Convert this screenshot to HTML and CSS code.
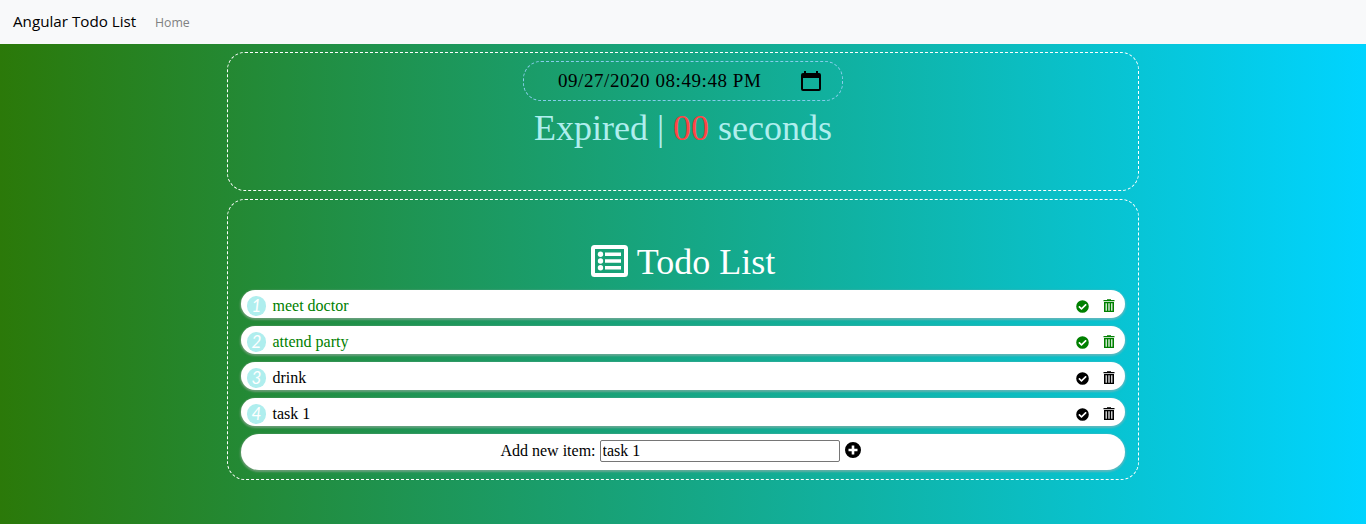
FILE: index.html
```
<!DOCTYPE html>
<html lang="en">
<head>
<meta charset="utf-8">
<title>Angular Todo List</title>
<link rel="stylesheet" href="styles.css">
</head>
<body>
<svg class="defs" width="0" height="0">
  <symbol id="check" viewBox="0 0 512 512"><path d="M504 256A248 248 0 1 1 8 256a248 248 0 0 1 496 0zM227 387 411 203c6-6 6-16 0-22l-22-23c-7-6-17-6-23 0L216 308l-70-70c-6-6-16-6-23 0l-22 23c-6 6-6 16 0 22l104 104c6 6 16 6 22 0z"/></symbol>
  <symbol id="trash" viewBox="0 0 12 13"><path fill-rule="evenodd" d="M.500 1H4V.300h4V1h3.500v1.200H.500zM1 3h10v10H1zM2.600 4.300v7.500h1.200V4.300zM5.400 4.300v7.500h1.200V4.300zM8.200 4.300v7.500h1.200V4.300z"/></symbol>
</svg>
<nav class="navbar">
  <a class="brand">Angular Todo List</a>
  <a class="nav-link">Home</a>
</nav>
<main class="container">
  <section class="panel timer">
    <div class="date-field"><span class="date-text">09/27/2020 08:49:48 PM</span>
      <svg class="calendar" viewBox="0 0 20 21"><path fill-rule="evenodd" d="M3 0h2v2h10V0h2v2h1q2 0 2 2v14q0 2-2 2H2q-2 0-2-2V4q0-2 2-2h1zM2 7v11h16V7z"/></svg>
    </div>
    <div class="countdown">Expired | <span class="count">00</span> seconds</div>
  </section>
  <section class="panel todo">
    <h1 class="title"><svg class="list-icon" viewBox="0 0 37 32"><path fill-rule="evenodd" d="M3.500 0h30Q37 0 37 3.500v25Q37 32 33.500 32h-30Q0 32 0 28.500v-25Q0 0 3.500 0zM4 4v24h29V4z"/><circle cx="9.500" cy="9.300" r="2.700"/><circle cx="9.500" cy="16" r="2.700"/><circle cx="9.500" cy="22.700" r="2.700"/><path d="M14 7.500h16v3.500H14zM14 14.300h16v3.500H14zM14 21h16v3.500H14z"/></svg><span>Todo List</span></h1>
    <ul class="items">
      <li class="item done"><i class="num">1</i><span class="label">meet doctor</span><svg class="check"><use href="#check"/></svg><svg class="trash"><use href="#trash"/></svg></li>
      <li class="item done"><i class="num">2</i><span class="label">attend party</span><svg class="check"><use href="#check"/></svg><svg class="trash"><use href="#trash"/></svg></li>
      <li class="item"><i class="num">3</i><span class="label">drink</span><svg class="check"><use href="#check"/></svg><svg class="trash"><use href="#trash"/></svg></li>
      <li class="item"><i class="num">4</i><span class="label">task 1</span><svg class="check"><use href="#check"/></svg><svg class="trash"><use href="#trash"/></svg></li>
    </ul>
    <form class="add"><label for="new-item">Add new item:</label><input id="new-item" class="new-item" value="task 1"><svg class="plus" viewBox="0 0 16 16"><path fill-rule="evenodd" d="M8 0a8 8 0 1 1 0 16A8 8 0 0 1 8 0zM6.700 3.500v3.200H3.500v2.600h3.200v3.200h2.600V9.300h3.200V6.700H9.300V3.500z"/></svg></form>
  </section>
</main>
</body>
</html>
```

FILE: styles.css
```
* { box-sizing: border-box; }
body {
  margin: 0;
  min-height: 524px;
  font: 16px/24px "Liberation Serif", serif;
  color: #000;
  background: linear-gradient(90deg, rgb(43, 121, 9), rgb(0, 212, 255));
}
svg { fill: currentColor; flex: none; }
.defs { position: absolute; }
.navbar {
  height: 44px;
  padding: 0 13px 2px;
  display: flex;
  align-items: center;
  gap: 19px;
  background: #f8f9fa;
  font-family: "Open Sans", sans-serif;
}
.brand { font-size: 15.200px; width: 123px; white-space: nowrap; }
.nav-link { font-size: 12.300px; color: #808182; padding-top: 3px; }
.container { width: 912px; margin: 8px auto 0; }
.panel { border: 1px dashed #fff; border-radius: 18px; }
.timer {
  height: 139px;
  margin-bottom: 8px;
  padding-top: 8px;
  display: flex;
  flex-direction: column;
  align-items: center;
}
.date-field {
  width: 320px;
  height: 40px;
  padding: 0 21px 0 34px;
  display: flex;
  align-items: center;
  justify-content: space-between;
  border: 1px dashed #87ceeb;
  border-radius: 18px;
  font-size: 19px;
}
.date-text { letter-spacing: 0.560px; white-space: nowrap; }
.calendar { width: 20px; height: 21px; }
.countdown { font-size: 36px; line-height: 54px; color: #afeeee; white-space: nowrap; }
.count { color: #ff4444; }
.todo { height: 281px; padding: 41px 13px 0; }
.title {
  margin: 0 0 8px;
  height: 41px;
  display: flex;
  align-items: center;
  justify-content: center;
  gap: 9px;
  font-size: 36px;
  font-weight: 400;
  color: #fff;
}
.list-icon { width: 37px; height: 32px; margin-bottom: 2px; }
.items { list-style: none; margin: 0; padding: 0; }
.item {
  height: 28px;
  margin-bottom: 8px;
  padding: 4px 10px 0 6px;
  display: flex;
  align-items: center;
  border-radius: 14px;
  background: #fff;
  box-shadow: 0 1px 2px 1px rgba(175, 175, 175, 0.500);
}
.done { color: green; }
.num {
  width: 19px;
  height: 20px;
  margin-right: 6.500px;
  border-radius: 10px;
  background: #afeeee;
  color: #fff;
  font: italic 17px/19px Lato, sans-serif;
  text-align: center;
}
.label { flex: 1; }
.check { width: 13px; height: 13px; margin: 0 14px 0 0; }
.trash { width: 12px; height: 13px; margin-bottom: 1px; }
.add {
  height: 36px;
  padding-bottom: 2px;
  display: flex;
  align-items: center;
  justify-content: center;
  border-radius: 18px;
  background: #fff;
  box-shadow: 0 1px 2px 1px rgba(175, 175, 175, 0.500);
}
.new-item {
  width: 240px;
  height: 22px;
  margin: 0 5px 0 4px;
  padding: 1px 2px;
  border: 1px solid #767676;
  border-radius: 2px;
  font: 16px "Liberation Serif", serif;
}
.plus { width: 16px; height: 16px; margin: 0 5px 2px 0; }
```
